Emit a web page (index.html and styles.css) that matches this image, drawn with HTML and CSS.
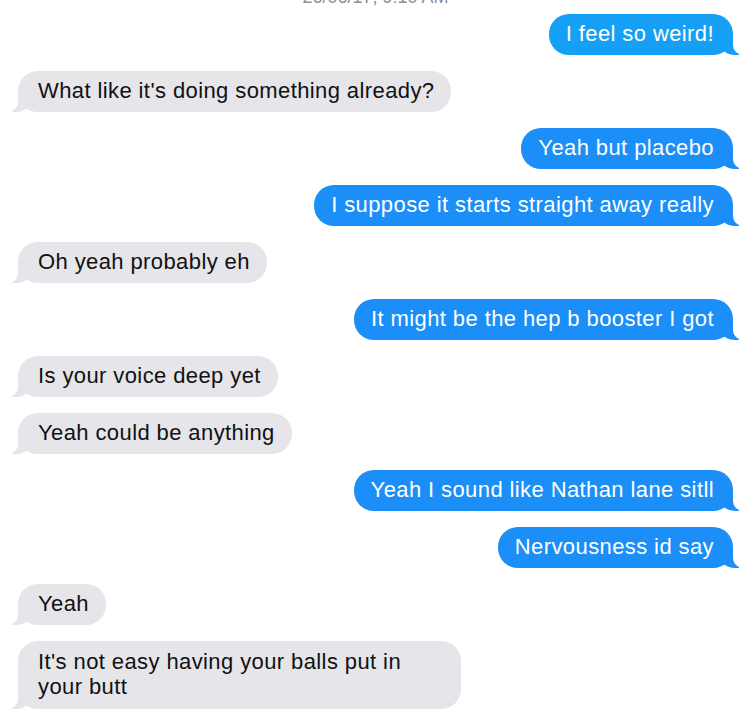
FILE: index.html
```html
<!DOCTYPE html>
<html lang="en">

<head>
    <meta charset="UTF-8">
    <meta name="viewport" content="width=device-width, initial-scale=1.0">
    <title>Messages</title>
    <link rel="stylesheet" href="styles.css">
</head>

<body>
    <div class="thread">
        <div class="stamp">26/06/17, 9:10 AM</div>

        <div class="msg sent first">I feel so weird!</div>
        <div class="msg got">What like it's doing something already?</div>
        <div class="msg sent">Yeah but placebo</div>
        <div class="msg sent">I suppose it starts straight away really</div>
        <div class="msg got">Oh yeah probably eh</div>
        <div class="msg sent">It might be the hep b booster I got</div>
        <div class="msg got">Is your voice deep yet</div>
        <div class="msg got">Yeah could be anything</div>
        <div class="msg sent">Yeah I sound like Nathan lane sitll</div>
        <div class="msg sent">Nervousness id say</div>
        <div class="msg got">Yeah</div>
        <div class="msg got wide">It's not easy having your balls put in your butt</div>
    </div>
</body>

</html>
```

FILE: styles.css
```css
/* page */
body {
    margin: 0;
    background: #fff;
    font-family: "Liberation Sans", Arial, Helvetica, sans-serif;
    overflow: hidden;
}

.thread {
    display: flex;
    flex-direction: column;
    gap: 16px;
    padding: 0 17px 0 18px;
}

/* timestamp, mostly scrolled off the top */
.stamp {
    margin-top: -13px;
    margin-bottom: -9px;
    text-align: center;
    font-size: 18px;
    line-height: 20px;
    color: #8e8e93;
}

/* bubbles */
.msg {
    position: relative;
    border-radius: 20px;
    font-size: 22px;
    line-height: 24px;
    letter-spacing: 0.4px;
    max-width: 403px;
}

.sent {
    align-self: flex-end;
    padding: 8px 19px 9px 17px;
    background: #1b8ef7;
    color: #fff;
}

.first {
    background: #16a0f5;
}

.got {
    align-self: flex-start;
    padding: 8px 17px 9px 20px;
    background: #e5e5ea;
    color: #111;
}

.wide {
    line-height: 25px;
    padding: 8px 20px 10px 20px;
}

/* tails */
.msg::before,
.msg::after {
    content: "";
    position: absolute;
    bottom: 0;
    height: 20px;
}

.sent::before {
    right: -6px;
    width: 20px;
    background: inherit;
    border-bottom-left-radius: 16px 14px;
}

.sent::after {
    right: -26px;
    width: 26px;
    background: #fff;
    border-bottom-left-radius: 10px;
}

.got::before {
    left: -6px;
    width: 20px;
    background: #e5e5ea;
    border-bottom-right-radius: 16px 14px;
}

.got::after {
    left: -26px;
    width: 26px;
    background: #fff;
    border-bottom-right-radius: 10px;
}
```
